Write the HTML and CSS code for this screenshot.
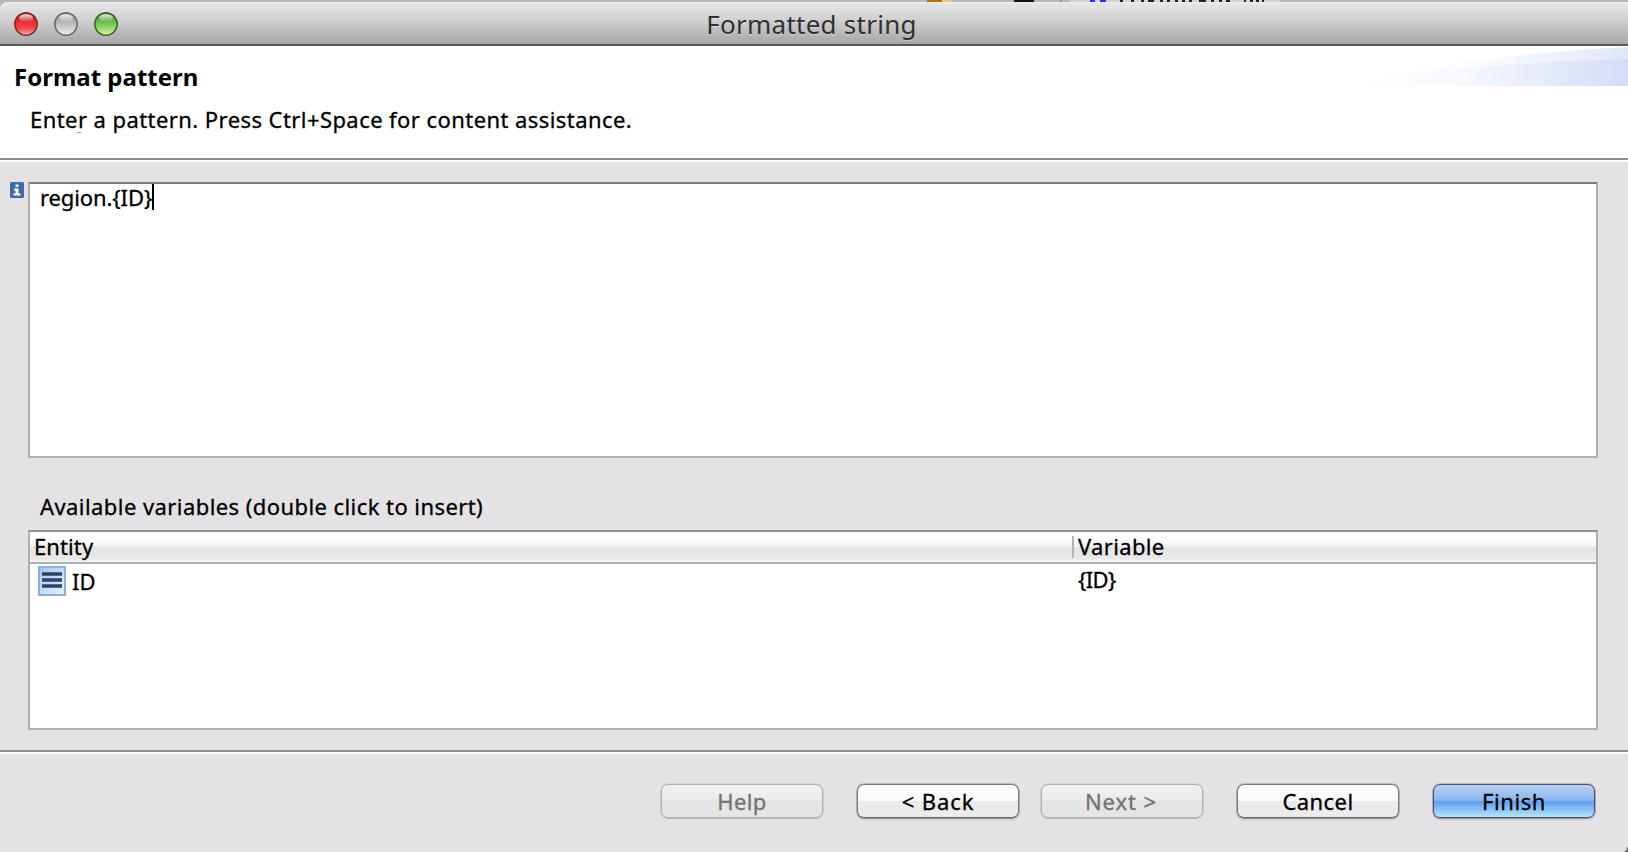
FILE: index.html
```
<!DOCTYPE html>
<html lang="en">
<head>
<meta charset="utf-8">
<title>Formatted string</title>
<link rel="stylesheet" href="styles.css">
</head>
<body>
<svg class="strip" viewBox="0 0 1628 2"><path fill="#b96b13" d="M927 0h15v2h-15z"/><path fill="#e2c88f" d="M942 0h9v2h-9z"/><path fill="#111" d="M1014 0h20v2h-20z"/><path fill="#8f8f8f" d="M1060 0h2v2h-2z"/><path fill="#d2d2d2" d="M1070 0h210v2h-210z"/><path fill="#3030e8" d="M1090 0h5v2h-5zM1100 0h6v2h-6z"/><path fill="#222" d="M1120 0h3v2h-3zM1131 0h3v2h-3zM1141 0h3v2h-3zM1148 0h6v2h-6zM1160 0h3v2h-3zM1167 0h3v2h-3zM1175 0h3v2h-3zM1182 0h3v2h-3zM1189 0h3v2h-3zM1199 0h7v2h-7zM1211 0h3v2h-3zM1219 0h3v2h-3zM1226 0h4v2h-4zM1244 0h2v2h-2zM1250 0h3v2h-3zM1256 0h3v2h-3zM1262 0h2v2h-2z"/></svg>
<main class="window">
  <header class="titlebar">
    <div class="lights">
      <svg class="light" viewBox="0 0 24 24">
        <defs>
          <linearGradient id="red" x2="0" y2="1"><stop offset="0" stop-color="#a51d22"/><stop offset=".45" stop-color="#ee2f33"/><stop offset=".7" stop-color="#f14a4b"/><stop offset="1" stop-color="#ffb5b0"/></linearGradient>
          <linearGradient id="gray" x2="0" y2="1"><stop offset="0" stop-color="#8b8b8b"/><stop offset=".45" stop-color="#b9b9b9"/><stop offset="1" stop-color="#eeeeee"/></linearGradient>
          <linearGradient id="green" x2="0" y2="1"><stop offset="0" stop-color="#37782a"/><stop offset=".45" stop-color="#70c04b"/><stop offset="1" stop-color="#d9f7a8"/></linearGradient>
          <linearGradient id="shine" x2="0" y2="1"><stop offset="0" stop-color="#fff" stop-opacity=".85"/><stop offset="1" stop-color="#fff" stop-opacity=".08"/></linearGradient>
        </defs>
        <circle cx="12" cy="12" r="11.2" fill="url(#red)" stroke="#7c2a2c" stroke-width="1.5"/><ellipse cx="12" cy="6" rx="7" ry="3.8" fill="url(#shine)"/>
      </svg>
      <svg class="light" viewBox="0 0 24 24"><circle cx="12" cy="12" r="11.2" fill="url(#gray)" stroke="#6b6b6b" stroke-width="1.5"/><ellipse cx="12" cy="6" rx="7" ry="3.8" fill="url(#shine)"/></svg>
      <svg class="light" viewBox="0 0 24 24"><circle cx="12" cy="12" r="11.2" fill="url(#green)" stroke="#3e652c" stroke-width="1.5"/><ellipse cx="12" cy="6" rx="7" ry="3.8" fill="url(#shine)"/></svg>
    </div>
    <h1 class="title">Formatted string</h1>
  </header>
  <section class="banner">
    <div>
      <h2 class="heading">Format pattern</h2>
      <p class="hint">Enter a pattern. Press Ctrl+Space for content assistance.</p>
      <div class="tick"></div>
    </div>
    <svg class="swoosh" viewBox="0 0 280 40">
      <defs>
        <linearGradient id="sweep"><stop offset="0" stop-color="#fff"/><stop offset=".4" stop-color="#f7f9fe"/><stop offset=".7" stop-color="#e5ebf9"/><stop offset="1" stop-color="#d5ddf6"/></linearGradient>
        <linearGradient id="haze"><stop offset="0" stop-color="#fff"/><stop offset=".5" stop-color="#f9fbff"/><stop offset="1" stop-color="#dfe7f8"/></linearGradient>
      </defs>
      <path fill="url(#haze)" d="M0 40Q110 10 280 1V40Z"/>
      <path fill="url(#sweep)" d="M0 40Q100 18 280 13V40Z"/>
    </svg>
  </section>
  <section class="content">
    <div class="pattern">
      <svg class="info" viewBox="0 0 14 16"><rect width="14" height="16" rx="1.5" fill="#3d6ca5"/><path fill="#fff" d="M5.500 2.500h3v2.500h-3zM4 6.500h4.500v5H10.500v2h-7v-2H5.500v-3H4z"/></svg>
      <div class="editor"><span class="value">region.{ID}</span><span class="caret"></span></div>
    </div>
    <div class="label">Available variables (double click to insert)</div>
    <div class="table">
      <div class="row head"><div class="cell entity">Entity</div><div class="cell variable">Variable</div></div>
      <div class="row">
        <div class="cell entry">
          <svg class="field" viewBox="0 0 28 30"><defs><linearGradient id="tile" x2="1" y2="1"><stop offset="0" stop-color="#a6c6f0"/><stop offset="1" stop-color="#e2f2ff"/></linearGradient></defs><rect x="1" y="1" width="26" height="28" fill="url(#tile)" stroke="#8fade0" stroke-width="2"/><path stroke="#2f4263" stroke-width="3.400" d="M4 8h20M4 14h20M4 20h20"/></svg>
          <span class="name">ID</span>
        </div>
        <div class="cell token">{ID}</div>
      </div>
    </div>
  </section>
  <footer class="actions">
    <button class="btn help" disabled>Help</button>
    <button class="btn back">&lt; Back</button>
    <button class="btn next" disabled>Next &gt;</button>
    <button class="btn cancel">Cancel</button>
    <button class="btn finish">Finish</button>
    <svg class="corner" viewBox="0 0 4 6"><path fill="#666" d="M4 0V6H0Q3 4 4 0Z"/></svg>
  </footer>
</main>
</body>
</html>
```
FILE: styles.css
```
* { box-sizing: border-box; }
body {
  margin: 0;
  height: 852px;
  display: flex;
  flex-direction: column;
  overflow: hidden;
  background: #b8b8b8;
  color: #000;
  font: 22px/30px "Noto Sans", sans-serif;
  -webkit-text-stroke: .3px;
}
h1, h2, p { margin: 0; }
svg { display: block; flex: none; }

.strip { width: 1628px; height: 2px; }
.window { flex: 1; display: flex; flex-direction: column; }

.titlebar {
  height: 44px;
  display: grid;
  grid-template-columns: 200px 1fr 200px;
  border-bottom: 2px solid #585858;
  border-radius: 8px 0 0 0;
  background: linear-gradient(#e8e8e8, #cfcfcf 45%, #a6a6a6);
  box-shadow: inset 0 1px 0 #f0f0f0;
}
.lights { display: flex; gap: 16px; padding: 10px 14px; }
.light { width: 24px; height: 24px; }
.title {
  padding: 4px 5px 0 0;
  color: #303030;
  font-size: 26px;
  font-weight: 400;
  line-height: 36px;
  letter-spacing: .26px;
  text-align: center;
  text-shadow: 0 1px 0 rgba(255, 255, 255, .4);
  -webkit-text-stroke: 0;
}

.banner {
  height: 116px;
  display: flex;
  justify-content: space-between;
  padding: 0 0 0 14px;
  border-bottom: 2px solid #fff;
  background: #fff;
  box-shadow: inset 0 -2px 0 #8e8e8e;
}
.heading { padding-top: 16px; font-size: 24px; line-height: 30px; letter-spacing: 0; -webkit-text-stroke: 0; }
.hint { padding: 12px 0 0 16px; letter-spacing: .43px; }
.tick { width: 4px; height: 1px; margin: -2px 0 0 63px; background: #999; }
.swoosh { width: 280px; height: 40px; }

.content { height: 588px; padding: 20px 30px 0 28px; background: #e4e2e5; }
.pattern { display: flex; margin-left: -18px; }
.info { width: 14px; height: 16px; margin-right: 4px; }
.editor {
  flex: 1;
  height: 276px;
  display: flex;
  padding: 0 10px;
  border: 2px solid #b0b0b2;
  border-top-color: #7c7b7e;
  background: #fff;
}
.value { line-height: 27px; letter-spacing: -.1px; }
.caret { width: 2px; height: 26px; background: #000; }
.label { height: 72px; padding: 33px 0 0 12px; letter-spacing: .43px; }

.table {
  height: 200px;
  border: 2px solid #b0b0b2;
  border-top-color: #8e8d90;
  background: #fff;
}
.row { display: grid; grid-template-columns: 1042px 1fr; }
.head {
  height: 32px;
  border-bottom: 2px solid #b0b0b0;
  background: linear-gradient(#fff 0, #fff 20%, #f2f2f2 50%, #e5e5e5 50%, #e8e8e8 88%, #f6f6f6);
  line-height: 28px;
}
.entity { padding-left: 4px; letter-spacing: .1px; }
.variable {
  padding-left: 6px;
  letter-spacing: .35px;
  background: linear-gradient(#b5b5b5, #b5b5b5) 0 4px / 2px 22px no-repeat;
}
.entry { display: flex; padding: 2px 0 0 8px; }
.field { width: 28px; height: 30px; }
.name { padding: 0 0 0 6px; }
.token { padding: 0 0 0 6px; letter-spacing: -.6px; }

.actions {
  position: relative;
  flex: 1;
  display: flex;
  justify-content: flex-end;
  padding: 34px 33px 0 0;
  background: #e4e2e5;
  box-shadow: inset 0 2px 0 #8e8e90, inset 0 4px 0 #fff;
}
.btn {
  width: 162px;
  height: 34px;
  padding: 0;
  border: 1px solid #7c7c7c;
  border-bottom-color: #656565;
  border-radius: 7px;
  background: linear-gradient(#fff, #fbfbfb 48%, #eaeaea 52%, #ececec);
  box-shadow: 0 0 0 .5px rgba(0, 0, 0, .35), 0 1px 2px rgba(0, 0, 0, .3);
  color: #000;
  font: inherit;
  line-height: 32px;
  -webkit-text-stroke: .3px;
}
.btn:disabled {
  border-color: #afafb0;
  background: linear-gradient(#f1f1f2, #ebebec 48%, #e4e4e5 52%, #e6e6e7);
  box-shadow: 0 0 0 .5px rgba(0, 0, 0, .15), 0 1px 1px rgba(0, 0, 0, .12);
  color: #727272;
}
.help { letter-spacing: .4px; }
.back { margin-left: 34px; letter-spacing: .9px; }
.next { margin-left: 22px; padding-right: 2px; letter-spacing: .9px; }
.cancel { margin-left: 34px; letter-spacing: .45px; }
.finish {
  margin-left: 34px;
  border-color: #4e4e78;
  background: linear-gradient(#b9d0f2, #8ab6ef 48%, #629eee 52%, #82bdf5 72%, #b5e6fb);
  letter-spacing: .6px;
}
.corner { position: absolute; right: 0; bottom: 0; width: 4px; height: 6px; }
```
